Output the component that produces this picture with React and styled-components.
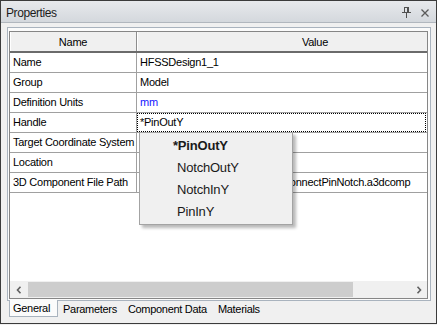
import React from 'react';
import styled, { createGlobalStyle } from 'styled-components';

const Global = createGlobalStyle`
  html, body { margin: 0; padding: 0; background: #f0f0f0; }
  body { font-family: "Liberation Sans", Arial, sans-serif; }
  * { box-sizing: border-box; }
`;

const Window = styled.div`
  width: 437px;
  height: 324px;
  border: 1px solid #3b3b3b;
  background: #f0f0f0;
  display: flex;
  flex-direction: column;
  overflow: hidden;
`;

const TitleBar = styled.div`
  height: 22px;
  flex: none;
  display: flex;
  align-items: center;
  justify-content: space-between;
  padding: 2px 7px 0 5px;
  background: linear-gradient(#e7e9ec, #d4d8dd);
  border-bottom: 1px solid #b1b7be;
`;

const Title = styled.span`
  font-size: 12px;
  letter-spacing: -0.4px;
  color: #1b1b1b;
`;

const TitleButtons = styled.div`
  display: flex;
  align-items: center;
  gap: 10px;
`;

const Body = styled.div`
  flex: 1;
  display: flex;
  flex-direction: column;
  padding: 4px 5px 0 6px;
`;

const Frame = styled.div`
  height: 274px;
  flex: none;
  display: flex;
  border: 1px solid #a9b3be;
  background: #fbfbfb;
  padding: 3px 2px 1px 1px;
`;

const Grid = styled.div`
  flex: 1;
  display: flex;
  flex-direction: column;
  border: 1px solid #868686;
  background: #fff;
  min-width: 0;
`;

const Viewport = styled.div`
  flex: 1;
  position: relative;
  overflow: hidden;
`;

const Table = styled.div`
  width: 484px;
  display: flex;
  flex-direction: column;
  font-size: 11px;
  letter-spacing: -0.25px;
  color: #000;
`;

const HeaderRow = styled.div`
  display: flex;
  height: 21px;
  background: #f0f0f0;
  border-bottom: 2px solid #6b6b6b;
`;

const HeaderCell = styled.div`
  width: ${p => p.$w}px;
  flex: none;
  text-align: center;
  line-height: 20px;
  border-right: 1px solid #8d8d8d;
  box-shadow: inset 1px 0 0 #ffffff;
`;

const Row = styled.div`
  display: flex;
  height: 20px;
  border-bottom: 1px solid #a0a0a0;
`;

const Cell = styled.div`
  width: ${p => p.$w}px;
  flex: none;
  position: relative;
  padding-left: ${p => p.$pad}px;
  line-height: 19px;
  white-space: nowrap;
  overflow: ${p => (p.$open ? 'visible' : 'hidden')};
  border-right: 1px solid #a0a0a0;
  color: ${p => (p.$blue ? '#1515ff' : '#000')};
`;

const FocusBox = styled.div`
  position: absolute;
  left: 0;
  top: 0;
  width: 289px;
  height: 19px;
  border: 1px dotted #000;
  pointer-events: none;
`;

const Popup = styled.div`
  position: absolute;
  left: 2px;
  top: 19px;
  width: 154px;
  z-index: 10;
  padding: 2px 0 1px;
  background: #f0f0f0;
  border: 1px solid #a3a3a3;
  box-shadow: 3px 3px 3px rgba(0, 0, 0, 0.28);
  font-size: 13px;
  letter-spacing: -0.2px;
`;

const PopupItem = styled.div`
  height: 22px;
  line-height: 22px;
  padding-left: ${p => (p.$bold ? 33 : 37)}px;
  font-weight: ${p => (p.$bold ? 700 : 400)};
  color: #1a1a1a;
`;

const ScrollBar = styled.div`
  height: 17px;
  flex: none;
  display: flex;
  align-items: center;
  background: #f0f0f0;
`;

const ArrowBtn = styled.div`
  width: 17px;
  height: 17px;
  flex: none;
  display: flex;
  align-items: center;
  justify-content: center;
`;

const Track = styled.div`
  flex: 1;
  height: 15px;
  display: flex;
  padding-left: 1px;
`;

const Thumb = styled.div`
  height: 15px;
  background: #cdcdcd;
`;

const TabStrip = styled.div`
  display: flex;
  padding-left: 2px;
  font-size: 11px;
  letter-spacing: -0.3px;
  color: #000;
`;

const Tab = styled.div`
  height: ${p => (p.$active ? 17 : 16)}px;
  margin-top: ${p => (p.$active ? -1 : 0)}px;
  line-height: ${p => (p.$active ? 17 : 16)}px;
  padding: ${p => (p.$active ? '0 7px 0 3px' : '0 6px 0 5px')};
  background: ${p => (p.$active ? '#fbfbfb' : 'transparent')};
  border: ${p => (p.$active ? '1px solid #a9b3be' : 'none')};
  border-top: none;
`;

const PinIcon = () => (
  <svg width="9" height="11" viewBox="0 0 9 11" fill="none" stroke="#505050" strokeWidth="1" shapeRendering="crispEdges">
    <path d="M2.5 0.5h4v5h-4z" />
    <path d="M5.5 0.5v5" />
    <path d="M0 5.5h9" />
    <path d="M4.5 5.5v5" />
  </svg>
);

const CloseIcon = () => (
  <svg width="8" height="8" viewBox="0 0 8 8" fill="none" stroke="#5a5a5a" strokeWidth="1.3">
    <path d="M0.5 0.5L7.5 7.5M7.5 0.5L0.5 7.5" />
  </svg>
);

const Chevron = ({ dir }) => (
  <svg width="6" height="8" viewBox="0 0 6 8" fill="none" stroke="#606060" strokeWidth="1.6">
    {dir === 'left' ? <path d="M4.5 0.8L1.5 4L4.5 7.2" /> : <path d="M1.5 0.8L4.5 4L1.5 7.2" />}
  </svg>
);

const NAME_W = 127;
const VALUE_W = 357;

const rows = [
  { name: 'Name', value: 'HFSSDesign1_1' },
  { name: 'Group', value: 'Model' },
  { name: 'Definition Units', value: 'mm', blue: true },
  { name: 'Handle', value: '*PinOutY', open: true },
  { name: 'Target Coordinate System', value: 'Global' },
  { name: 'Location', value: '0,0,0' },
  { name: '3D Component File Path', value: 'C:/Ansys/Library/Components/ConnectPinNotch.a3dcomp' },
];

const options = [
  { label: '*PinOutY', bold: true },
  { label: 'NotchOutY' },
  { label: 'NotchInY' },
  { label: 'PinInY' },
];

const tabs = ['General', 'Parameters', 'Component Data', 'Materials'];

export default function App() {
  return (
    <>
      <Global />
      <Window>
        <TitleBar>
          <Title>Properties</Title>
          <TitleButtons>
            <PinIcon />
            <CloseIcon />
          </TitleButtons>
        </TitleBar>
        <Body>
          <Frame>
            <Grid>
              <Viewport>
                <Table>
                  <HeaderRow>
                    <HeaderCell $w={NAME_W}>Name</HeaderCell>
                    <HeaderCell $w={VALUE_W}>Value</HeaderCell>
                  </HeaderRow>
                  {rows.map(r => (
                    <Row key={r.name}>
                      <Cell $w={NAME_W} $pad={3}>{r.name}</Cell>
                      <Cell $w={VALUE_W} $pad={3} $blue={r.blue} $open={r.open}>
                        {r.value}
                        {r.open && (
                          <>
                            <FocusBox />
                            <Popup>
                              {options.map(o => (
                                <PopupItem key={o.label} $bold={o.bold}>{o.label}</PopupItem>
                              ))}
                            </Popup>
                          </>
                        )}
                      </Cell>
                    </Row>
                  ))}
                </Table>
              </Viewport>
              <ScrollBar>
                <ArrowBtn><Chevron dir="left" /></ArrowBtn>
                <Track>
                  <Thumb style={{ width: 325 }} />
                </Track>
                <ArrowBtn><Chevron dir="right" /></ArrowBtn>
              </ScrollBar>
            </Grid>
          </Frame>
          <TabStrip>
            {tabs.map((t, i) => (
              <Tab key={t} $active={i === 0}>{t}</Tab>
            ))}
          </TabStrip>
        </Body>
      </Window>
    </>
  );
}
